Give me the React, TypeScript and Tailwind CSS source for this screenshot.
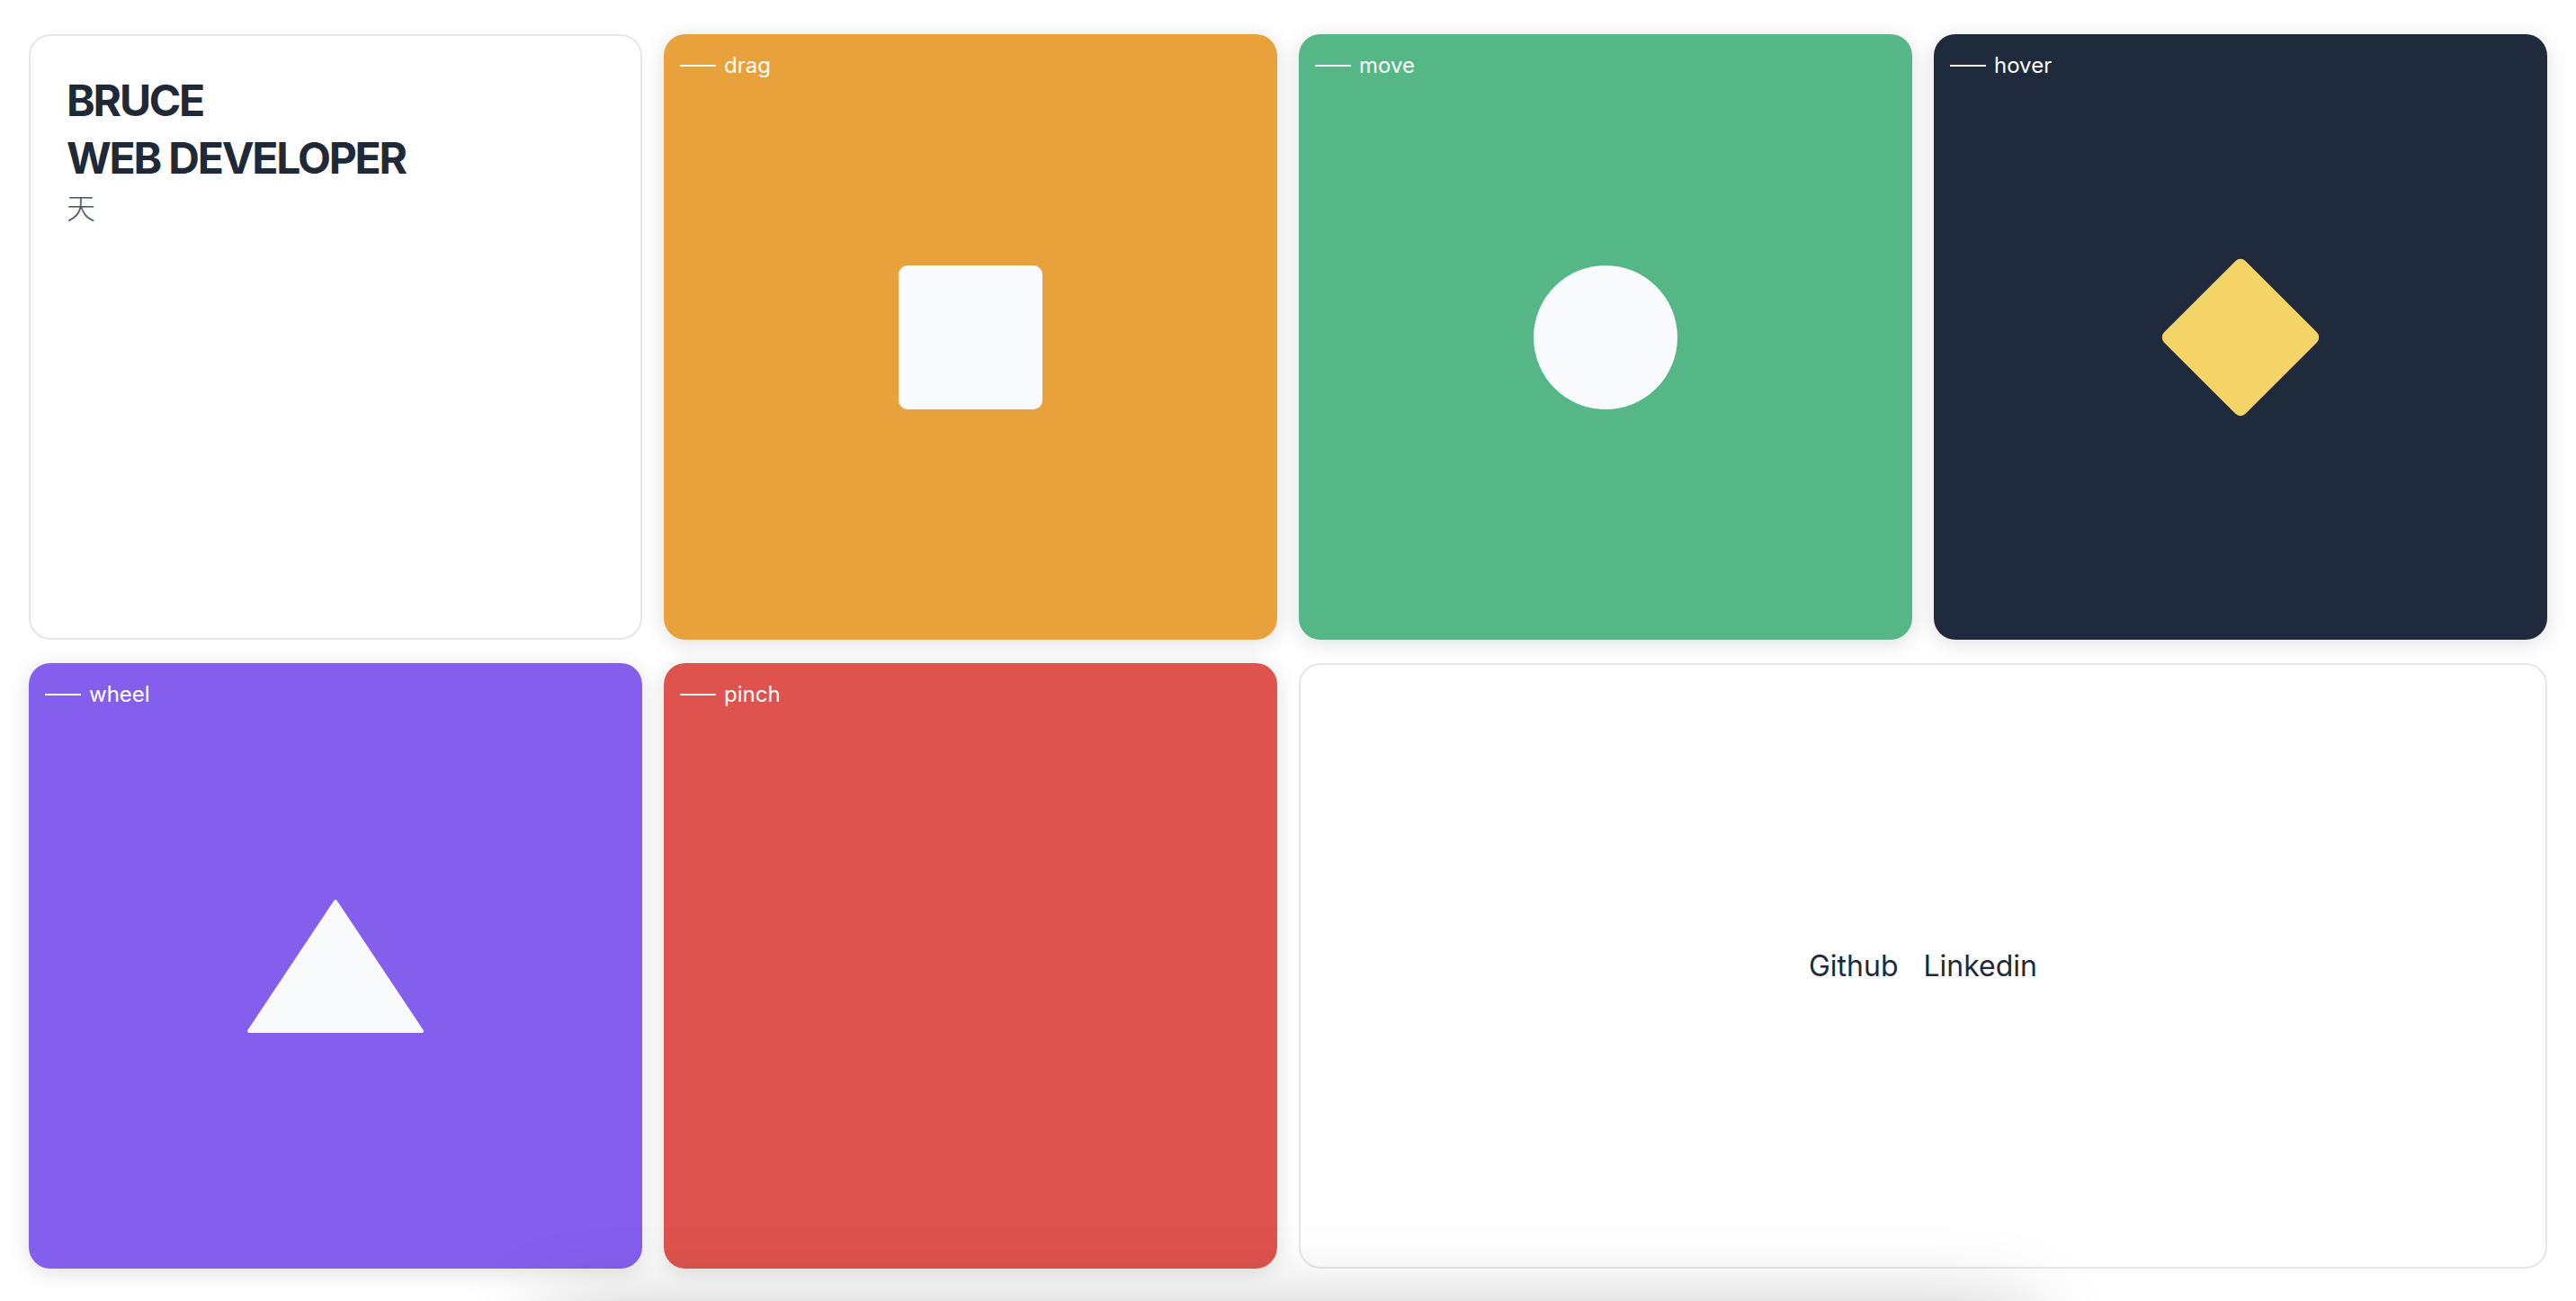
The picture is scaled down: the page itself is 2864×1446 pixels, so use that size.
import React from "react"

const font = { fontFamily: "Inter, 'Noto Sans CJK SC', sans-serif" }

function Label({ text }: { text: string }) {
  return (
    <div className="[grid-area:1/1] self-start justify-self-start flex items-center gap-[9px] pl-[18px] pt-[19px] text-white">
      <span className="block w-[40px] h-[2px] bg-white" />
      <span className="text-[24px] leading-[32px]">{text}</span>
    </div>
  )
}

function ShapeCard({ label, bg, children }: { label: string; bg: string; children?: React.ReactNode }) {
  return (
    <div className={`grid rounded-[24px] shadow-[0_4px_24px_rgba(0,0,0,0.13)] ${bg}`}>
      <Label text={label} />
      {children && <div className="[grid-area:1/1] place-self-center">{children}</div>}
    </div>
  )
}

export default function App() {
  return (
    <div className="h-[1446px] overflow-hidden bg-white" style={font}>
      <div className="px-[32px] pt-[38px]">
        <div className="grid grid-cols-4 gap-x-[24px] gap-y-[26px] [grid-template-rows:673px_673px]">
          <div className="rounded-[24px] border-2 border-[#e5e7eb] bg-white p-[40px]">
            <h1 className="text-[48px] leading-[64px] font-bold tracking-[-2.2px] text-[#1f2937]">
              BRUCE
              <br />
              WEB DEVELOPER
            </h1>
            <p className="text-[32px] leading-[48px] font-light text-[#4b5563]">天</p>
          </div>

          <ShapeCard label="drag" bg="bg-[#e8a13b]">
            <div className="w-[160px] h-[160px] rounded-[10px] bg-[#f8fafc]" />
          </ShapeCard>

          <ShapeCard label="move" bg="bg-[#55b786]">
            <div className="w-[160px] h-[160px] rounded-full bg-[#f8fafc]" />
          </ShapeCard>

          <ShapeCard label="hover" bg="bg-[#1f2a3c]">
            <div className="w-[128px] h-[128px] rotate-45 rounded-[8px] bg-[#f4d466]" />
          </ShapeCard>

          <ShapeCard label="wheel" bg="bg-[#845fee]">
            <svg width="198" height="150" viewBox="0 0 198 150">
              <polygon
                points="99,3 195,147 3,147"
                fill="#f8fafc"
                stroke="#f8fafc"
                strokeWidth="4"
                strokeLinejoin="round"
              />
            </svg>
          </ShapeCard>

          <ShapeCard label="pinch" bg="bg-[#de534e]" />

          <div className="col-span-2 flex items-center justify-center gap-[28px] rounded-[24px] border-2 border-[#e5e7eb] bg-white text-[32px] leading-[48px] text-[#1f2937]">
            <span>Github</span>
            <span>Linkedin</span>
          </div>
        </div>

        {/* next section, only its shadow shows */}
        <div className="relative mx-auto mt-[58px] w-[1640px] h-[300px] bg-white shadow-[0_0_100px_rgba(0,0,0,0.3)]" />
      </div>
    </div>
  )
}
